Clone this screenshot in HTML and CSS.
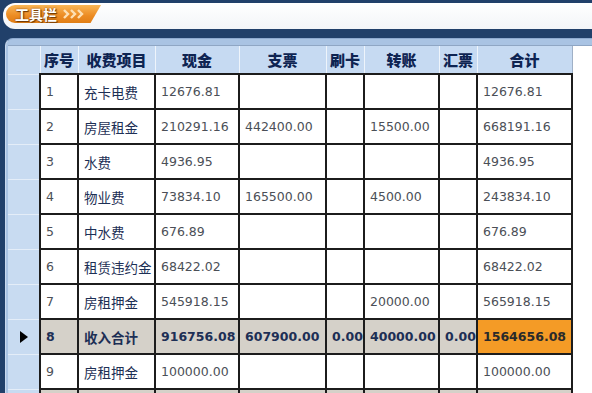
FILE: index.html
```html
<!DOCTYPE html>
<html lang="zh-CN">
<head>
    <meta charset="UTF-8">
    <title>收费汇总</title>
    <link rel="stylesheet" href="styles.css">
</head>
<body>
    <div class="toolbar">
        <div class="tab">
            <span class="tab-title">工具栏</span>
            <svg class="chevrons" width="24" height="10" viewBox="0 0 24 10">
                <polyline points="2,1 6,5 2,9" />
                <polyline points="9,1 13,5 9,9" />
                <polyline points="16,1 20,5 16,9" />
            </svg>
        </div>
    </div>

    <div class="panel">
        <div class="grid">
            <table class="fees">
                <colgroup>
                    <col style="width:32px">
                    <col style="width:38px">
                    <col style="width:77px">
                    <col style="width:84px">
                    <col style="width:87px">
                    <col style="width:38px">
                    <col style="width:75px">
                    <col style="width:38px">
                    <col style="width:95px">
                </colgroup>
                <thead>
                    <tr>
                        <th class="rh"></th>
                        <th>序号</th>
                        <th>收费项目</th>
                        <th>现金</th>
                        <th>支票</th>
                        <th>刷卡</th>
                        <th>转账</th>
                        <th>汇票</th>
                        <th>合计</th>
                    </tr>
                </thead>
                <tbody>
                    <tr>
                        <th class="rh"></th>
                        <td>1</td><td class="name">充卡电费</td><td>12676.81</td><td></td><td></td><td></td><td></td><td>12676.81</td>
                    </tr>
                    <tr>
                        <th class="rh"></th>
                        <td>2</td><td class="name">房屋租金</td><td>210291.16</td><td>442400.00</td><td></td><td>15500.00</td><td></td><td>668191.16</td>
                    </tr>
                    <tr>
                        <th class="rh"></th>
                        <td>3</td><td class="name">水费</td><td>4936.95</td><td></td><td></td><td></td><td></td><td>4936.95</td>
                    </tr>
                    <tr>
                        <th class="rh"></th>
                        <td>4</td><td class="name">物业费</td><td>73834.10</td><td>165500.00</td><td></td><td>4500.00</td><td></td><td>243834.10</td>
                    </tr>
                    <tr>
                        <th class="rh"></th>
                        <td>5</td><td class="name">中水费</td><td>676.89</td><td></td><td></td><td></td><td></td><td>676.89</td>
                    </tr>
                    <tr>
                        <th class="rh"></th>
                        <td>6</td><td class="name">租赁违约金</td><td>68422.02</td><td></td><td></td><td></td><td></td><td>68422.02</td>
                    </tr>
                    <tr>
                        <th class="rh"></th>
                        <td>7</td><td class="name">房租押金</td><td>545918.15</td><td></td><td></td><td>20000.00</td><td></td><td>565918.15</td>
                    </tr>
                    <tr class="total">
                        <th class="rh">
                            <svg width="8" height="12" viewBox="0 0 8 12"><polygon points="0,0 8,6 0,12" /></svg>
                        </th>
                        <td>8</td><td class="name">收入合计</td><td>916756.08</td><td>607900.00</td><td>0.00</td><td>40000.00</td><td>0.00</td><td class="current">1564656.08</td>
                    </tr>
                    <tr>
                        <th class="rh"></th>
                        <td>9</td><td class="name">房租押金</td><td>100000.00</td><td></td><td></td><td></td><td></td><td>100000.00</td>
                    </tr>
                    <tr class="total">
                        <th class="rh"></th>
                        <td></td><td class="name"></td><td></td><td></td><td></td><td></td><td></td><td></td>
                    </tr>
                </tbody>
            </table>
        </div>
    </div>
</body>
</html>
```

FILE: styles.css
```css
:root {
    --frame-dark: #21406a;
    --band-blue: #a9c3e3;
    --head-blue: #c6daf2;
    --row-head: #c8dbf1;
    --grid-line: #1c1c1c;
    --total-grey: #d5d1c9;
    --current-orange: #f49b26;
    --text-navy: #1d2f55;
    --text-num: #4b4f57;
}

html, body {
    height: 100%;
}

body {
    margin: 0;
    background-color: var(--frame-dark);
    overflow: hidden;
    font-family: "DejaVu Sans", Verdana, sans-serif;
}

/* toolbar strip */
.toolbar {
    margin: 3px 0 0 3px;
    height: 26px;
    background: linear-gradient(#ffffff, #f3f5f8);
    border-radius: 12px 0 0 12px;
    padding: 2px 0 0 3px;
    box-sizing: border-box;
}

.tab {
    width: 95px;
    height: 18px;
    display: flex;
    align-items: center;
    gap: 5px;
    padding-left: 9px;
    box-sizing: border-box;
    background: linear-gradient(#f8b656, #ec8b22 60%, #e07e16);
    border-radius: 9px 0 0 9px;
    clip-path: polygon(0 0, 100% 0, 89% 100%, 0 100%);
}

.tab-title {
    font-family: "Noto Sans CJK SC", sans-serif;
    font-size: 14px;
    font-weight: bold;
    line-height: 1;
    color: #ffffff;
    text-shadow: 0 0 2px #7a3d00, 1px 1px 1px #6a3400;
}

.chevrons polyline {
    fill: none;
    stroke: #fde0b4;
    stroke-width: 2.4;
}

/* grid panel */
.panel {
    margin: 9px 0 0 5px;
    border-top: 1px solid #8eaad0;
    border-left: 1px solid #c9d9ee;
    border-radius: 8px 0 0 0;
    background-color: var(--band-blue);
    padding: 6px 0 0 2px;
    height: calc(100% - 38px);
    box-sizing: border-box;
    overflow: hidden;
}

.grid {
    background-color: #ffffff;
    border-top: 1px solid #8fa6c4;
    height: 100%;
}

.fees {
    width: 564px;
    table-layout: fixed;
    border-collapse: collapse;
    font-size: 12.5px;
    color: var(--text-num);
}

.fees thead th {
    height: 27px;
    padding: 0;
    background-color: var(--head-blue);
    border-right: 1px solid #eef4fb;
    border-bottom: 1px solid #9fb7d4;
    font-family: "Noto Sans CJK SC", sans-serif;
    font-size: 15px;
    font-weight: 900;
    color: #0e2452;
    text-align: center;
    white-space: nowrap;
    overflow: hidden;
}

.fees thead th:last-child {
    border-right: 1px solid #9fb0c6;
}

.fees .rh {
    padding: 0;
    background-color: var(--row-head);
    border-bottom: 1px solid #e4edf8;
    text-align: center;
    vertical-align: middle;
}

.fees .rh svg {
    display: block;
    margin: 0 auto;
}

.fees .rh polygon {
    fill: #000000;
}

.fees td {
    height: 33px;
    padding: 0 0 0 5px;
    border: 2px solid var(--grid-line);
    white-space: nowrap;
    overflow: hidden;
    vertical-align: middle;
}

.fees td.name {
    font-family: "Noto Sans CJK SC", sans-serif;
    font-size: 13.5px;
    color: var(--text-navy);
}

.fees tr.total td {
    background-color: var(--total-grey);
    font-weight: bold;
    color: var(--text-navy);
}

.fees tr.total td.current {
    background-color: var(--current-orange);
    color: #2a2a2a;
}
```
